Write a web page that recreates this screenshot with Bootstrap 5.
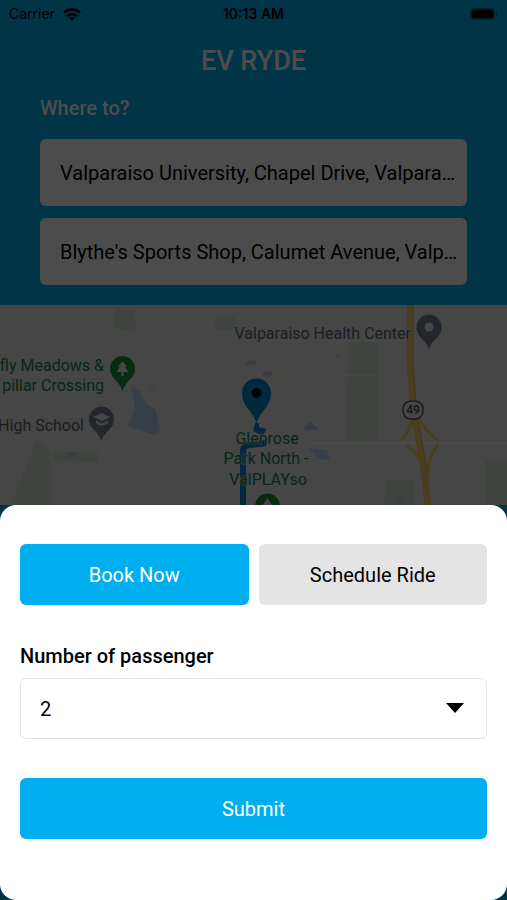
<!DOCTYPE html>
<html lang="en">
<head>
<meta charset="utf-8">
<meta name="viewport" content="width=device-width, initial-scale=1">
<title>EV Ryde</title>
<link href="https://cdn.jsdelivr.net/npm/bootstrap@5.3.0/dist/css/bootstrap.min.css" rel="stylesheet">
<style>
  :root { --ryde: #00adef; }
  body { font-family: Roboto, "Liberation Sans", sans-serif; background: var(--ryde); color: #000; font-size: 20px; line-height: 24px; }
  .status { font-family: Inter, sans-serif; font-size: 14px; line-height: 28px; padding: 0 9px; display: grid; grid-template-columns: 1fr auto 1fr; }
  .status-time { font-weight: 600; }
  .brand-title { font-size: 27px; line-height: 32px; font-weight: 500; color: #fff; margin: 17px 0 19px; }
  .trip { padding: 0 40px 20px; }
  .trip-label { font-size: 20px; line-height: 24px; font-weight: 500; color: #fff; margin-bottom: 19px; }
  .places { gap: 12px; }
  .place { height: 67px; padding: 0 8px 0 20px; border: 0; border-radius: 6px; font-size: 20px; color: #000; background: #fff; text-overflow: ellipsis; }
  .map-pane { background: #ebebeb; min-height: 200px; flex: 1 1 0; overflow: hidden; }
  .map-pane svg { display: block; width: 100%; height: 100%; }
  .map-pane text { font-family: Roboto, sans-serif; font-size: 16px; }
  .map-pane .route-no { font-size: 12px; font-weight: 500; }
  .dim { background: rgba(0, 0, 0, .7); z-index: 1; }
  .sheet { z-index: 2; background: #fff; border-radius: 16px; padding: 39px 20px 61px; }
  .choices { gap: 10px; }
  .act { height: 61px; border: 0; border-radius: 6px; font-size: 20px; color: #000; background: #e4e4e4; }
  .act-main, .act-main:hover { background: var(--ryde); color: #fff; }
  .act-submit { margin-top: 39px; }
  .count-label { font-weight: 500; margin: 39px 0 10px; }
  .count { height: 61px; border: 1px solid #e4e4e4; border-radius: 6px; padding: 0 48px 0 19px; font-size: 20px; color: #000; background-image: none; }
  .caret { right: 22px; top: 24px; pointer-events: none; }
</style>
<script src="https://cdn.jsdelivr.net/npm/bootstrap@5.3.0/dist/js/bootstrap.bundle.min.js"></script>
</head>
<body>
<div class="position-relative d-flex flex-column min-vh-100">
  <header>
    <div class="status align-items-center">
      <div class="d-flex align-items-center gap-2">
        <span>Carrier</span>
        <svg width="18" height="13" viewBox="0 0 18 13" aria-hidden="true"><g fill="none" stroke="#000" stroke-width="2.6"><path d="M1 4.800Q9-2 17 4.800"/><path d="M4 8.200Q9 4 14 8.200"/></g><path d="M9 13 6 10Q9 7.600 12 10Z"/></svg>
      </div>
      <span class="status-time">10:13 AM</span>
      <svg class="ms-auto" width="28" height="12" viewBox="0 0 28 12" aria-hidden="true"><rect x=".5" y=".5" width="24" height="11" rx="3" fill="none" stroke="#000" stroke-opacity=".35"/><rect x="1.500" y="1.500" width="22" height="9" rx="2"/><path d="M26 4v4q1.500-.5 1.500-2T26 4" fill-opacity=".4"/></svg>
    </div>
    <h1 class="brand-title text-center">EV RYDE</h1>
    <div class="trip">
      <h2 class="trip-label">Where to?</h2>
      <div class="places d-flex flex-column">
        <input class="place w-100" type="text" aria-label="Pickup" value="Valparaiso University, Chapel Drive, Valparaiso, IN, USA">
        <input class="place w-100" type="text" aria-label="Destination" value="Blythe's Sports Shop, Calumet Avenue, Valparaiso, IN, USA">
      </div>
    </div>
  </header>
  <div class="map-pane">
    <svg viewBox="0 305 507 200" preserveAspectRatio="xMidYMin slice" role="img" aria-label="Map of Valparaiso">
      <g fill="#d6e3d3">
        <path d="M115 308l17 2 6 14-7 7-17-3zM348 342h30v98h-32zM386 480h28v26h-30zM485 461h22v45h-20zM36 440l12 8 4 20v38H10l14-34zM52 452h46v10l-44-1zM146 384l10 4-6 8zM215 316h20v14h-20z"/>
      </g>
      <g fill="#f1ebdc"><path d="M262 376l24-6 10 8-22 12zM236 410l12-6v22l-10-4z"/></g>
      <g stroke="#f3f3f3" stroke-width="1.500" fill="none">
        <path d="M140 374H250M250 375H380M107 445V505M174 376V505M378 445V505M190 378l-14 30"/>
        <path d="M310 443H507" stroke="#fcfcfc"/>
      </g>
      <g fill="#b4cfee">
        <path d="M131 386l8 4 7 14 9 5 5 22-6 4-26-9 7-17zM245 362l8-2 6 4-13 1zM263 372l10-1-2 6-9-1zM304 427l6-5 8 6v2h-13zM308 448l19 2 3 10-11-1zM66 454l8-2 3 4-8 2zM397 497l7 1-2 8h-6z"/>
      </g>
      <path d="M333 357l6-4 1 4z" fill="#cfcfcf"/>
      <g fill="none" stroke="#f3d46a">
        <path d="M410 305V360Q411 390 416 425Q425 470 428 506" stroke-width="7"/>
        <path d="M412 415Q411 432 401 440M420 419Q425 432 439 441M406 445Q422 454 424 478M438 445Q428 456 427 478" stroke-width="3"/>
      </g>
      <path d="M413 305V360Q414 390 419 425L427 470" fill="none" stroke="#d8b64c" stroke-width="1"/>
      <path d="M243 506V451Q243 446 249 445L266 443" fill="none" stroke="#0086d6" stroke-width="6"/>
      <path d="M255 423h4v4l7 2-2 5h-5l-6-3z" fill="#0086d6"/>
      <g fill="#5f6872" stroke="#ebebeb" stroke-width="2" paint-order="stroke">
        <text x="411" y="339" text-anchor="end">Valparaiso Health Center</text>
        <text x="84" y="431" text-anchor="end">High School</text>
      </g>
      <g fill="#20804a" stroke="#ebebeb" stroke-width="1" paint-order="stroke">
        <text x="104" y="371" text-anchor="end">fly Meadows &amp;</text>
        <text x="104" y="391" text-anchor="end">pillar Crossing</text>
        <g text-anchor="middle"><text x="267" y="444">Glenrose</text><text x="266" y="464">Park North -</text><text x="268" y="485">ValPLAYso</text></g>
      </g>
      <path d="M429 350C427 340 416.500 338 416.500 327a12.500 12.500 0 0 1 25 0C441.500 338 431 340 429 350" fill="#77838f"/>
      <circle cx="429" cy="327" r="4.500" fill="#ebebeb"/>
      <path d="M122.500 392C120.500 381 110 379 110 368.500a12.500 12.500 0 0 1 25 0C135 379 124.500 381 122.500 392" fill="#21913a"/>
      <path d="M122.500 361l4.500 6h-2l3.500 5h-5v4h-2v-4h-5l3.500-5h-2z" fill="#ebebeb"/>
      <path d="M101.500 442C99.500 431 89 430 89 419a12.500 12.500 0 0 1 25 0C114 430 103.500 431 101.500 442" fill="#77838f"/>
      <path d="M93 417l9-4 8 4-8 4zM96 420.500l6 3 6-3v3q-6 4-12 0z" fill="#ebebeb"/>
      <path d="M256.500 425C254.500 411 242 408 242 393a14.500 14.500 0 0 1 29 0C271 408 258.500 411 256.500 425" fill="#008acb"/>
      <circle cx="256.500" cy="393" r="5" fill="#111"/>
      <circle cx="267.500" cy="506" r="12.500" fill="#21913a"/>
      <path d="M267.500 498l6 9h-12z" fill="#ebebeb"/>
      <rect x="403" y="401" width="20" height="18" rx="8" fill="#ebebeb" stroke="#555" stroke-width="1.500"/>
      <text class="route-no" x="413" y="414" text-anchor="middle" fill="#444">49</text>
    </svg>
  </div>
  <div class="dim position-absolute top-0 bottom-0 start-0 end-0"></div>
  <form class="sheet position-relative" onsubmit="return false">
    <div class="choices d-flex">
      <button type="button" class="btn act act-main w-50">Book Now</button>
      <button type="button" class="btn act w-50">Schedule Ride</button>
    </div>
    <label class="count-label d-block" for="passengers">Number of passenger</label>
    <div class="position-relative">
      <select class="form-select count" id="passengers"><option>1</option><option selected>2</option><option>3</option><option>4</option></select>
      <svg class="caret position-absolute" width="20" height="12" viewBox="0 0 20 12" aria-hidden="true"><path d="M1 1h18l-9 10z"/></svg>
    </div>
    <button type="submit" class="btn act act-main act-submit w-100">Submit</button>
  </form>
</div>
</body>
</html>
